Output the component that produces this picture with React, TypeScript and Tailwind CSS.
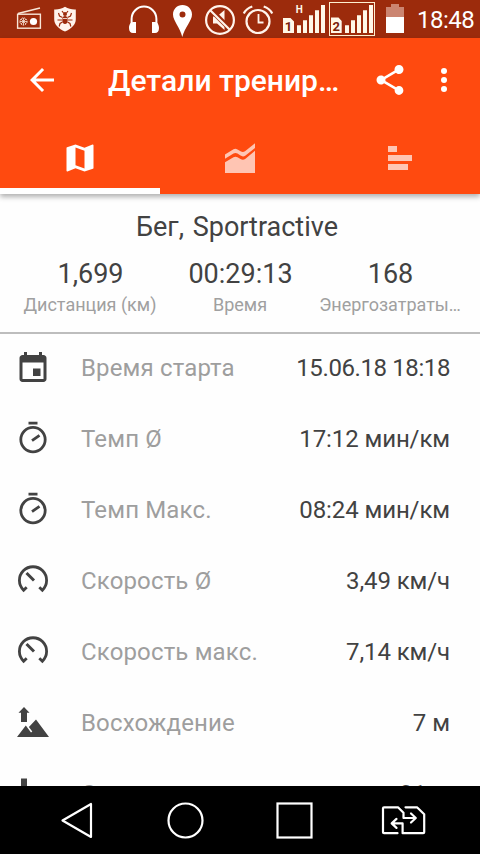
import type { ReactNode } from "react";

function StatusBar() {
  return (
    <div className="flex h-[38px] shrink-0 items-center bg-[#9c2b0c] text-white">
      <svg className="ml-4 h-[38px] w-[26px]" viewBox="16 0 26 38" fill="none" stroke="#f8e6d8">
        <rect x="17.6" y="14.2" width="22.8" height="14" strokeWidth="1.4" />
        <path d="M18 13.5L40 8" strokeWidth="1.4" />
        <circle cx="23.5" cy="21.5" r="3.6" strokeWidth="1" strokeDasharray="1.6 0.8" />
        <path d="M20 21.5h7M23.5 18v7M21 19l5 5M26 19l-5 5" strokeWidth="0.8" />
        <circle cx="33.5" cy="21.5" r="3.6" fill="#fff" stroke="none" />
      </svg>
      <svg className="ml-3 h-[38px] w-[22px]" viewBox="54 0 22 38">
        <path d="M65 6.8c3.500 2.200 7 2.800 10.800 2.600v9.800c0 5.300-4.300 9.500-10.800 12.300-6.500-2.800-10.800-7-10.800-12.300V9.400c3.800.2 7.300-.4 10.800-2.600z" fill="#fff4ec" />
        <g fill="#9c2b0c" stroke="#9c2b0c">
          <ellipse cx="65" cy="20" rx="2.7" ry="4" stroke="none" />
          <circle cx="65" cy="14" r="2" stroke="none" />
          <path d="M62.5 17.5l-3-1.500-1-3M62 20h-4.500M62.500 22l-2.500 1.500-.8 3M67.500 17.500l3-1.500 1-3M68 20h4.500M67.500 22l2.500 1.500.8 3M63.500 13l-1.500-2M66.500 13l1.500-2" fill="none" strokeWidth="1.2" />
          <path d="M63 18.5h4" stroke="#fff4ec" strokeWidth="0.8" />
        </g>
      </svg>
      <svg className="ml-[52px] h-[38px] w-[32px]" viewBox="128 0 32 38">
        <path d="M131.600 24v-5a12.400 12.400 0 0124.800 0v5" fill="none" stroke="#fff" strokeWidth="2" />
        <path d="M136 22v11h-3c-2.500 0-4-1.800-4-5s1.500-6 4-6zM152 22v11h3c2.500 0 4-1.800 4-5s-1.500-6-4-6z" fill="#fff" />
      </svg>
      <svg className="ml-3 h-[38px] w-[20px]" viewBox="172 0 20 38">
        <path fillRule="evenodd" d="M182.500 5c-5.500 0-9.500 4.200-9.500 9.500 0 6.500 7 12.500 9.300 22.500 2.500-10 9.700-16 9.700-22.500 0-5.300-4-9.500-9.500-9.500zm0 6.500a3 3 0 110 6 3 3 0 010-6z" fill="#fff" />
      </svg>
      <svg className="ml-3 h-[38px] w-[32px]" viewBox="204 0 32 38">
        <path d="M213 16.500h4l7.500-6.500v20l-7.500-6.500h-4z" fill="#fff4ec" />
        <path d="M210.500 9.500l20 20" stroke="#9c2b0c" strokeWidth="5" />
        <circle cx="220" cy="20" r="13.9" fill="none" stroke="#fff4ec" strokeWidth="2.2" />
        <path d="M210.200 10.200l19.600 19.600" stroke="#fff4ec" strokeWidth="2.2" />
      </svg>
      <svg className="ml-[6px] h-[38px] w-[32px]" viewBox="242 0 32 38" fill="none" stroke="#fff4ec" strokeWidth="2.2">
        <circle cx="258" cy="21.5" r="11.5" />
        <path d="M243.800 13.500q2.500-5 8.500-7M272.200 13.500q-2.500-5-8.500-7" />
        <path d="M258.500 14v8.500h5" strokeWidth="1.8" />
      </svg>
      <svg className="ml-2 h-[38px] w-[96px]" viewBox="282 0 96 38" fill="#fff8e8">
        <path d="M283 18h7.500l3.500 3.500V33h-11zM297 25.300h4V33h-4zM303 20.300h4V33h-4zM309 15.300h4V33h-4zM315 10.300h4V33h-4zM321 5h4v28h-4z" />
        <path d="M331 17.500h7.500l3.200 3.500v12H331zM345 25.300h4V33h-4zM351 20.300h4V33h-4zM357 15.300h4V33h-4zM363 10.300h4V33h-4zM369 5h4v28h-4z" />
        <rect x="329.5" y="2.5" width="45" height="33" fill="none" stroke="#fff0d0" />
        <text x="288.5" y="31" textAnchor="middle" fill="#7a2008" className="font-[Roboto] text-[13px] font-bold">1</text>
        <text x="336.3" y="31" textAnchor="middle" fill="#7a2008" className="font-[Roboto] text-[13px] font-bold">2</text>
        <text x="299.3" y="12.5" textAnchor="middle" className="font-[Roboto] text-[10px] font-bold">H</text>
      </svg>
      <svg className="ml-2 h-[38px] w-[18px]" viewBox="386 0 18 38">
        <path d="M391 4h8v3h5v10h-18V7h5z" fill="#cb8571" />
        <path d="M386 17h18v16h-18z" fill="#fff" />
      </svg>
      <div className="ml-[13px] w-[60px] whitespace-nowrap pt-[2px] text-2xl leading-[38px] tracking-[-0.5px]">18:48</div>
    </div>
  );
}

function Header() {
  return (
    <header className="relative z-10 h-[156px] shrink-0 bg-[#ff4a0f] text-white shadow-[0_3px_5px_rgba(0,0,0,0.3)]">
      <div className="flex h-[84px] items-center pl-6">
        <svg className="h-9 w-9 shrink-0" viewBox="0 0 24 24" fill="currentColor">
          <path d="M20 11H7.830l5.590-5.590L12 4l-8 8 8 8 1.410-1.410L7.830 13H20z" />
        </svg>
        <h1 className="ml-12 w-[264px] whitespace-nowrap pt-[2px] text-[30px] font-medium leading-[82px]">Детали тренир…</h1>
        <svg className="h-9 w-9 shrink-0" viewBox="0 0 24 24" fill="currentColor">
          <path d="M18 16.080c-.760 0-1.440.3-1.960.770L8.910 12.700c.05-.230.090-.460.090-.7s-.04-.470-.090-.7l7.050-4.110c.540.5 1.250.810 2.040.810 1.660 0 3-1.340 3-3s-1.340-3-3-3-3 1.340-3 3c0 .240.04.470.09.7L8.040 9.810C7.500 9.310 6.790 9 6 9c-1.660 0-3 1.340-3 3s1.340 3 3 3c.790 0 1.500-.310 2.040-.810l7.120 4.160c-.05.210-.08.430-.08.650 0 1.610 1.310 2.920 2.920 2.920s2.920-1.310 2.920-2.920-1.310-2.920-2.920-2.920z" />
        </svg>
        <svg className="ml-[18px] h-9 w-9 shrink-0" viewBox="0 0 24 24" fill="currentColor">
          <circle cx="12" cy="6" r="2" />
          <circle cx="12" cy="12" r="2" />
          <circle cx="12" cy="18" r="2" />
        </svg>
      </div>
      <nav className="grid h-[72px] grid-cols-3">
        <div className="flex items-center justify-center border-b-[6px] border-white pt-[6px]">
          <svg className="h-9 w-9" viewBox="0 0 24 24" fill="currentColor">
            <path d="M20.500 3l-.160.030L15 5.100 9 3 3.360 4.900c-.210.070-.360.250-.360.480V20.500c0 .280.220.5.5.5l.160-.030L9 18.900l6 2.100 5.640-1.900c.210-.070.360-.250.360-.480V3.500c0-.280-.220-.5-.5-.5zM15 19l-6-2.110V5l6 2.110V19z" />
          </svg>
        </div>
        <div className="flex items-center justify-center">
          <svg className="h-9 w-9" viewBox="222 140 36 36" fill="#ffc5b3">
            <path d="M225 154.500L233.500 149.300Q235.500 148.300 237.500 149.500L241 151.600Q243 152.600 245 151.300L255 143.200V148L245.500 155.500Q243 157.200 240.500 155.600L237.500 153.600Q235.500 152.400 233.500 153.500L225 158.800z" />
            <path d="M225 162.300L233.500 157.200Q235.500 156.100 237.500 157.300L240.500 159Q243 160.400 245.500 158.700L255 150.800V173H225z" />
          </svg>
        </div>
        <div className="flex items-center justify-center">
          <svg className="h-9 w-9" viewBox="382 140 36 36" fill="#ffc5b3">
            <path d="M388 146h9v6h-9zM388 155h24v6h-24zM388 164h20v6h-20z" />
          </svg>
        </div>
      </nav>
    </header>
  );
}

function Summary() {
  const stats = [
    { value: "1,699", label: "Дистанция (км)" },
    { value: "00:29:13", label: "Время" },
    { value: "168", label: "Энергозатраты…" },
  ];
  return (
    <section className="h-[140px] shrink-0 border-b-2 border-[#bdbdbd] pt-4 text-center">
      <h2 className="pr-[6px] text-[27px] leading-[34px] [word-spacing:2px]">Бег, Sportractive</h2>
      <div className="mt-[14px] grid grid-cols-[150px_150px_150px] justify-center">
        {stats.map((stat) => (
          <div key={stat.label} className="whitespace-nowrap">
            <div className="pl-px text-[27px] leading-8">{stat.value}</div>
            <div className="text-lg leading-[30px] text-[#a0a0a0]">{stat.label}</div>
          </div>
        ))}
      </div>
    </section>
  );
}

const calendar = (
  <path transform="translate(0 0.5) scale(1.5)" fill="currentColor" d="M17 12h-5v5h5v-5zM16 1v2H8V1H6v2H5c-1.110 0-1.990.9-1.990 2L3 19c0 1.100.890 2 2 2h14c1.100 0 2-.9 2-2V5c0-1.100-.9-2-2-2h-1V1h-2zm3 18H5V8h14v11z" />
);
const stopwatch = (
  <g fill="none" stroke="currentColor" strokeWidth="2.8">
    <circle cx="18" cy="18.6" r="12.2" />
    <path d="M13.500 2.200h9M17 19.600l7.500-5.300" />
  </g>
);
const gauge = (
  <g transform="translate(0 -2.3)" fill="none" stroke="currentColor" strokeWidth="2.8">
    <path d="M11.700 26.500L8.600 29.500A13.600 13.600 0 1127.400 29.500L24.300 26.500" />
    <path d="M11.500 12.300l7.500 7.500" strokeWidth="3" />
  </g>
);
const ascent = (
  <path transform="translate(0 -1)" fill="currentColor" d="M9 3l5.500 5.700H12V18H6V8.700H3.500zM2 33l8.800-11.500 5.200 7 1.300-1-3.400-4.400L21 15.500 34 33z" />
);
const descent = <path fill="currentColor" d="M6 2.500h6v9h2.500L9 17.500l-5.500-6H6z" />;

const rows: { icon: ReactNode; label: string; value: string; valueClass: string }[] = [
  { icon: calendar, label: "Время старта", value: "15.06.18 18:18", valueClass: "tracking-[-0.4px]" },
  { icon: stopwatch, label: "Темп Ø", value: "17:12 мин/км", valueClass: "tracking-[-0.1px]" },
  { icon: stopwatch, label: "Темп Макс.", value: "08:24 мин/км", valueClass: "tracking-[-0.1px]" },
  { icon: gauge, label: "Скорость Ø", value: "3,49 км/ч", valueClass: "tracking-[-0.1px]" },
  { icon: gauge, label: "Скорость макс.", value: "7,14 км/ч", valueClass: "tracking-[-0.1px]" },
  { icon: ascent, label: "Восхождение", value: "7 м", valueClass: "" },
  { icon: descent, label: "Спуск", value: "31 м", valueClass: "" },
];

function NavigationBar() {
  return (
    <nav className="flex h-[68px] shrink-0 items-center bg-black">
      <svg className="ml-[58px] h-10 w-10" viewBox="0 0 40 40" fill="none" stroke="#fff" strokeWidth="2.2">
        <path d="M4.500 20.500L33 4v33z" strokeLinejoin="round" />
      </svg>
      <svg className="ml-[67px] h-10 w-10" viewBox="0 0 40 40" fill="none" stroke="#fff" strokeWidth="2.2">
        <circle cx="20.5" cy="20.5" r="17" />
      </svg>
      <svg className="ml-[69px] h-10 w-10" viewBox="0 0 40 40" fill="none" stroke="#fff" strokeWidth="2.2">
        <rect x="3.5" y="3.5" width="34" height="34" />
      </svg>
      <svg className="ml-[66px] h-10 w-12" viewBox="380 800 48 40" fill="none" stroke="#fff" strokeWidth="2.2" strokeLinecap="round" strokeLinejoin="round">
        <path d="M397.500 833.200H384q-1 0-1-1v-23.900q0-1 1-1h14l5.500 5.500v5.200h12M411 813.500l4.800 4.500-4.800 4.500" />
        <path d="M405.500 807.300H417l7.200 7v17.900q0 1-1 1h-20.600v-9.800H392M396.500 818.900l-4.800 4.500 4.800 4.500" />
      </svg>
    </nav>
  );
}

export default function App() {
  return (
    <div className="flex h-[854px] w-[480px] flex-col overflow-hidden bg-[#fefefe] font-[Roboto,'Noto_Sans',sans-serif] text-[#424242]">
      <StatusBar />
      <Header />
      <Summary />
      <main className="min-h-0 flex-1 overflow-hidden">
        {rows.map((row) => (
          <div key={row.label} className="flex h-[71px] items-center whitespace-nowrap pb-[3px] pl-[15px] pr-[30px] text-2xl">
            <svg className="h-9 w-9 shrink-0" viewBox="0 0 36 36">{row.icon}</svg>
            <span className="ml-[30px] flex-1 tracking-[0.15px] text-[#9e9e9e]">{row.label}</span>
            <span className={row.valueClass}>{row.value}</span>
          </div>
        ))}
      </main>
      <NavigationBar />
    </div>
  );
}
